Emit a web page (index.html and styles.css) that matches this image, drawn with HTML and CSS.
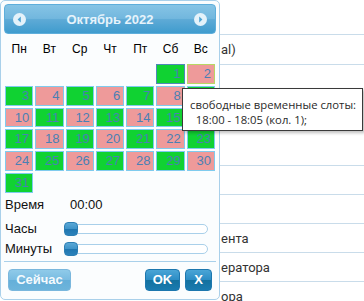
FILE: index.html
```html
<!DOCTYPE html>
<html lang="ru">
<head>
<meta charset="utf-8">
<title>Датапикер</title>
<link rel="stylesheet" href="styles.css">
</head>
<body>
<div class="page">
  <div class="row r1"></div>
  <div class="row r2"><span class="vis">al)</span></div>
  <div class="row r3"></div>
  <div class="row r4"></div>
  <div class="row r5"></div>
  <div class="row r6"><span class="vis">ента</span></div>
  <div class="row r7"><span class="vis">ератора</span></div>
  <div class="row r8"><span class="vis">ора</span></div>
</div>

<div class="dp">
  <div class="dp-head">
    <span class="nav"><svg width="13" height="13" viewBox="0 0 13 13"><circle cx="6.5" cy="6.5" r="6.5" fill="#e4f2fa"/><path d="M7.8 3.5 L4.6 6.5 L7.8 9.5 Z" fill="#4fa5d4"/></svg></span>
    <span class="title">Октябрь 2022</span>
    <span class="nav"><svg width="13" height="13" viewBox="0 0 13 13"><circle cx="6.5" cy="6.5" r="6.5" fill="#e4f2fa"/><path d="M5.2 3.5 L8.4 6.5 L5.2 9.5 Z" fill="#4fa5d4"/></svg></span>
  </div>
  <div class="cal">
    <div class="wd">Пн</div><div class="wd">Вт</div><div class="wd">Ср</div><div class="wd">Чт</div><div class="wd">Пт</div><div class="wd">Сб</div><div class="wd">Вс</div>
    <div></div><div></div><div></div><div></div><div></div>
    <div class="d g active">1</div><div class="d p today">2</div>
    <div class="d g">3</div><div class="d p">4</div><div class="d g">5</div><div class="d p">6</div><div class="d g">7</div><div class="d p">8</div><div class="d g">9</div>
    <div class="d p">10</div><div class="d g">11</div><div class="d p">12</div><div class="d g">13</div><div class="d p">14</div><div class="d g">15</div><div class="d p">16</div>
    <div class="d g">17</div><div class="d p">18</div><div class="d g">19</div><div class="d p">20</div><div class="d g">21</div><div class="d p">22</div><div class="d g">23</div>
    <div class="d p">24</div><div class="d g">25</div><div class="d p">26</div><div class="d g">27</div><div class="d p">28</div><div class="d g">29</div><div class="d p">30</div>
    <div class="d g">31</div>
  </div>
  <div class="time">
    <div class="trow first"><span class="lbl">Время</span><span class="tval">00:00</span></div>
    <div class="trow"><span class="lbl">Часы</span><span class="slider"><span class="handle"></span></span></div>
    <div class="trow"><span class="lbl">Минуты</span><span class="slider"><span class="handle"></span></span></div>
  </div>
  <div class="btns">
    <button class="btn light">Сейчас</button>
    <span class="spacer"></span>
    <button class="btn dark ok">OK</button>
    <button class="btn dark x">X</button>
  </div>
</div>

<div class="tip">свободные временные слоты:<br>&nbsp;&nbsp;18:00 - 18:05 (кол. 1);</div>
</body>
</html>
```

FILE: styles.css
```css
* { box-sizing: border-box; }
html, body { margin: 0; padding: 0; background: #fff; }
body { width: 364px; height: 301px; overflow: hidden; position: relative; font-family: Roboto, "Noto Sans", sans-serif; }

.page { display: flex; flex-direction: column; }
.row { display: flex; align-items: center; padding-left: 221px; border-bottom: 1px solid #c9dcea; font-size: 13px; color: #333; }
.row .vis { white-space: nowrap; }
.r1 { height: 35px; }
.r2 { height: 30px; }
.r3 { height: 101px; }
.r4 { height: 29px; }
.r5 { height: 29px; }
.r6 { height: 29px; }
.r7 { height: 29px; }
.r8 { height: 29px; border-bottom: none; }

.dp { position: absolute; left: 0; top: 0; width: 220px; height: 300px; padding: 3px; border: 1px solid #a9d0ea; border-radius: 5px; background: #fbfdfe; font-family: "Liberation Sans", Arial, sans-serif; }

.dp-head { height: 30px; display: flex; align-items: center; justify-content: space-between; padding: 0 8px; border: 1px solid #5eaedb; border-radius: 4px; background: linear-gradient(#86c4e5, #72b7de 48%, #5eaad6 52%, #3f9cce); }
.dp-head .title { font-weight: bold; font-size: 13px; color: #e6f3fb; }
.dp-head .nav { display: flex; width: 13px; height: 13px; }

.cal { display: grid; grid-template-columns: repeat(7, 1fr); grid-template-rows: 28px; grid-auto-rows: 19.8px; gap: 2px; padding: 0 1px; }
.wd { display: flex; align-items: center; justify-content: center; font-size: 12px; color: #000; padding-top: 1px; }
.d { border: 1px solid #7fcbee; font-size: 13px; color: #4a80b4; text-align: right; padding-right: 3px; line-height: 18px; }
.d.g { background: #10d232; }
.d.p { background: #ee9a9a; }
.d.active { border-color: #4f88b8; }
.d.today { border-color: #b9d763; }

.time { display: flex; flex-direction: column; margin-top: 2px; padding-left: 1px; font-size: 13px; color: #111; }
.trow { display: flex; align-items: center; height: 20px; }
.trow.first { margin-bottom: 4px; }
.lbl { width: 59px; }
.tval { padding-left: 6px; }
.slider { position: relative; height: 10px; width: 144px; border: 1px solid #a9d0ea; border-radius: 5px; background: #fff; }
.handle { position: absolute; left: -1px; top: -3px; width: 14px; height: 14px; border: 1px solid #2d7fb4; border-radius: 4px; background: linear-gradient(#5aa8d6, #3d93c8 50%, #1f76b0 52%, #2b82bb); }

.btns { display: flex; align-items: center; gap: 5px; margin-top: 2px; padding: 7px 4px 0 4px; border-top: 1px solid #a9d0ea; }
.spacer { flex: 1; }
.btn { height: 22px; padding: 0; border-radius: 4px; font-family: "Liberation Sans", Arial, sans-serif; font-weight: bold; font-size: 13px; color: #fff; cursor: pointer; }
.btn.light { width: 63px; border: 1px solid #7ab7dd; background: linear-gradient(#8fcae9, #79bbe1 50%, #65afd9 52%, #6db4db); color: #f4fafd; }
.btn.dark { border: 1px solid #1d77ae; background: linear-gradient(#4aa5d6, #2b8cc4 50%, #13719f 52%, #1a7bb0); }
.btn.ok { width: 35px; }
.btn.x { width: 27px; }

.tip { position: absolute; left: 182px; top: 88px; width: 181px; height: 43px; padding: 8px 4px 0 7px; background: #fff; border: 1px solid #3a3a3a; box-shadow: 2px 2px 3px rgba(0,0,0,0.25); font-family: "Open Sans", "Noto Sans", sans-serif; font-size: 11.3px; line-height: 15px; color: #2a2a2a; white-space: nowrap; }
```
